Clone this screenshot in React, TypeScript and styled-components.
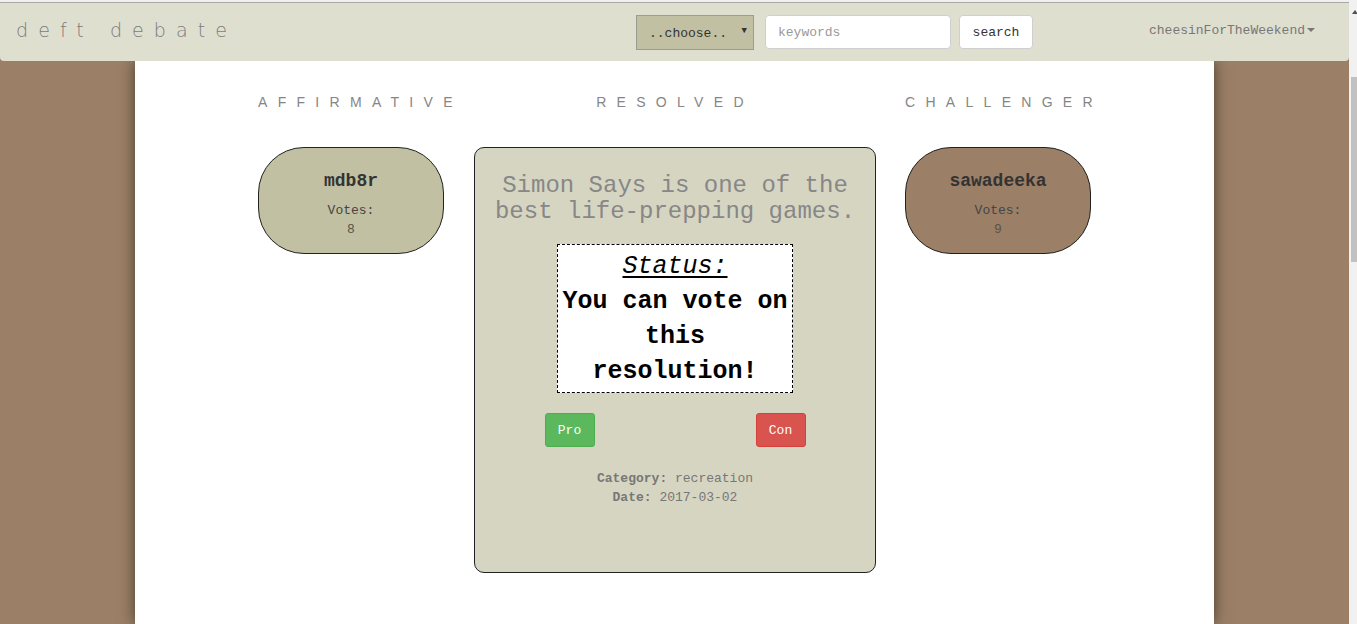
import React from "react";
import styled, { createGlobalStyle } from "styled-components";

const GlobalStyle = createGlobalStyle`
  html, body { margin: 0; padding: 0; height: 100%; overflow: hidden; }
  body { font-family: "Liberation Mono", "Courier New", monospace; background: #f1f1f1; }
  * { box-sizing: border-box; }
`;

const Shell = styled.div`
  display: flex;
  height: 100vh;
`;

const Page = styled.div`
  flex: 1;
  display: flex;
  flex-direction: column;
  background: #9b7f66;
  overflow: hidden;
`;

const TopStrip = styled.div`
  height: 3px;
  background: #f0f0f0;
  border-bottom: 1px solid #a8a8a8;
`;

const Navbar = styled.nav`
  height: 58px;
  background: #dfdfd0;
  border-radius: 0 0 4px 4px;
  display: flex;
  align-items: center;
  padding: 0 0 0 16px;
  position: relative;
  z-index: 2;
`;

const Brand = styled.div`
  font-family: "DejaVu Sans", "Liberation Sans", sans-serif;
  font-weight: 200;
  font-size: 19px;
  letter-spacing: 0.53em;
  color: #7c7c7c;
  white-space: pre;
  margin-top: -5px;
`;

const SearchForm = styled.div`
  display: flex;
  align-items: flex-start;
  margin-left: auto;
  margin-top: 0;
`;

const ChooseBox = styled.div`
  width: 118px;
  height: 35px;
  background: #c1c0a2;
  border: 1px solid #9c9c90;
  display: flex;
  align-items: center;
  padding: 2px 0 0 12px;
  font-size: 13px;
  color: #333;
  position: relative;
`;

const Caret = styled.span`
  position: absolute;
  right: 6px;
  top: 10px;
  font-size: 9px;
  color: #333;
`;

const KeywordInput = styled.input`
  width: 186px;
  height: 34px;
  margin-left: 11px;
  border: 1px solid #cfcfcf;
  border-radius: 4px;
  background: #fff;
  padding: 2px 12px 0;
  font-family: "Liberation Mono", "Courier New", monospace;
  font-size: 13px;
  color: #333;
  outline: none;
  &::placeholder { color: #999; }
`;

const SearchButton = styled.button`
  width: 74px;
  height: 34px;
  margin-left: 8px;
  border: 1px solid #cfcfcf;
  border-radius: 4px;
  background: #fff;
  font-family: "Liberation Mono", "Courier New", monospace;
  font-size: 13px;
  color: #333;
  padding: 1px 0 0;
`;

const UserMenu = styled.div`
  margin-left: 116px;
  width: 200px;
  font-size: 13px;
  color: #777;
  margin-top: -4px;
  display: flex;
  align-items: center;
`;

const UserCaret = styled.span`
  display: inline-block;
  width: 0;
  height: 0;
  margin-left: 2px;
  border-left: 4px solid transparent;
  border-right: 4px solid transparent;
  border-top: 4px solid #777;
`;

const Main = styled.main`
  width: 1079px;
  margin: 0 auto;
  flex: 1;
  background: #fff;
  box-shadow: 0 0 14px rgba(0, 0, 0, 0.55);
  display: flex;
  justify-content: center;
  padding-top: 33px;
`;

const Row = styled.div`
  display: flex;
  align-items: flex-start;
`;

const Column = styled.section<{ $w: number; $center?: boolean }>`
  width: ${(p) => p.$w}px;
  display: flex;
  flex-direction: column;
  align-items: ${(p) => (p.$center ? "center" : "flex-start")};
`;

const Gap = styled.div<{ $w: number }>`
  width: ${(p) => p.$w}px;
  flex-shrink: 0;
`;

const Heading = styled.h4`
  margin: 0 0 37px 0;
  font-family: "Liberation Sans", Arial, sans-serif;
  font-weight: 400;
  font-size: 14px;
  line-height: 16px;
  letter-spacing: 10.3px;
  color: #868686;
  white-space: nowrap;
`;

const SideCard = styled.div<{ $bg: string }>`
  width: 186px;
  height: 107px;
  border: 1px solid #222;
  border-radius: 46px;
  background: ${(p) => p.$bg};
  display: flex;
  flex-direction: column;
  align-items: center;
  padding-top: 23px;
`;

const Name = styled.div`
  font-weight: 700;
  font-size: 18px;
  line-height: 20px;
  color: #333;
`;

const VotesLabel = styled.div`
  margin-top: 10px;
  font-size: 13px;
  line-height: 19px;
  color: #444;
`;

const VotesCount = styled.div`
  font-size: 13px;
  line-height: 19px;
  color: #5a5448;
`;

const CenterCard = styled.div`
  width: 402px;
  height: 426px;
  border: 1px solid #222;
  border-radius: 10px;
  background: #d6d5c1;
  display: flex;
  flex-direction: column;
  align-items: center;
  padding-top: 25px;
`;

const Title = styled.h3`
  margin: 0;
  font-weight: 400;
  font-size: 24px;
  line-height: 26px;
  color: #878787;
  text-align: center;
  width: 372px;
`;

const StatusBox = styled.div`
  margin-top: 19px;
  width: 236px;
  background: #fff;
  border: 1px dashed #000;
  padding: 4px 3px 3px;
  text-align: center;
  color: #000;
  font-size: 25px;
  line-height: 35px;
`;

const StatusLabel = styled.div`
  font-style: italic;
  text-decoration: underline;
  text-underline-offset: 3px;
`;

const StatusText = styled.div`
  font-weight: 700;
`;

const Buttons = styled.div`
  margin-top: 20px;
  width: 261px;
  display: flex;
  justify-content: space-between;
`;

const VoteButton = styled.button<{ $kind: "pro" | "con" }>`
  width: 50px;
  height: 34px;
  border-radius: 3px;
  border: 1px solid ${(p) => (p.$kind === "pro" ? "#4cae4c" : "#d43f3a")};
  background: ${(p) => (p.$kind === "pro" ? "#5cb85c" : "#d9534f")};
  color: #fff;
  font-family: "Liberation Mono", "Courier New", monospace;
  font-size: 13px;
  padding: 0;
`;

const Meta = styled.div`
  margin-top: 22px;
  font-size: 13px;
  line-height: 19px;
  color: #777;
  text-align: center;
`;

const Scrollbar = styled.div`
  width: 8px;
  height: 100vh;
  background: #f1f1f1;
  display: flex;
  flex-direction: column;
  align-items: flex-end;
`;

const ScrollArrow = styled.div`
  margin-top: 10px;
  width: 0;
  height: 0;
  border-left: 3px solid transparent;
  border-right: 3px solid transparent;
  border-bottom: 4px solid #505050;
  margin-right: -1px;
`;

const ScrollThumb = styled.div`
  margin-top: 63px;
  width: 6px;
  height: 185px;
  background: #c1c1c1;
`;

export default function App() {
  return (
    <>
      <GlobalStyle />
      <Shell>
        <Page>
          <TopStrip />
          <Navbar>
            <Brand>deft debate</Brand>
            <SearchForm>
              <ChooseBox>
                ..choose..
                <Caret>▼</Caret>
              </ChooseBox>
              <KeywordInput placeholder="keywords" />
              <SearchButton>search</SearchButton>
            </SearchForm>
            <UserMenu>
              cheesinForTheWeekend
              <UserCaret />
            </UserMenu>
          </Navbar>
          <Main>
            <Row>
              <Column $w={186}>
                <Heading>AFFIRMATIVE</Heading>
                <SideCard $bg="#c1c0a2">
                  <Name>mdb8r</Name>
                  <VotesLabel>Votes:</VotesLabel>
                  <VotesCount>8</VotesCount>
                </SideCard>
              </Column>
              <Gap $w={30} />
              <Column $w={402} $center>
                <Heading>RESOLVED</Heading>
                <CenterCard>
                  <Title>Simon Says is one of the best life-prepping games.</Title>
                  <StatusBox>
                    <StatusLabel>Status:</StatusLabel>
                    <StatusText>You can vote on this resolution!</StatusText>
                  </StatusBox>
                  <Buttons>
                    <VoteButton $kind="pro">Pro</VoteButton>
                    <VoteButton $kind="con">Con</VoteButton>
                  </Buttons>
                  <Meta>
                    <div>
                      <b>Category:</b> recreation
                    </div>
                    <div>
                      <b>Date:</b> 2017-03-02
                    </div>
                  </Meta>
                </CenterCard>
              </Column>
              <Gap $w={29} />
              <Column $w={186}>
                <Heading>CHALLENGER</Heading>
                <SideCard $bg="#9b7f66">
                  <Name>sawadeeka</Name>
                  <VotesLabel>Votes:</VotesLabel>
                  <VotesCount>9</VotesCount>
                </SideCard>
              </Column>
            </Row>
          </Main>
        </Page>
        <Scrollbar>
          <ScrollArrow />
          <ScrollThumb />
        </Scrollbar>
      </Shell>
    </>
  );
}
